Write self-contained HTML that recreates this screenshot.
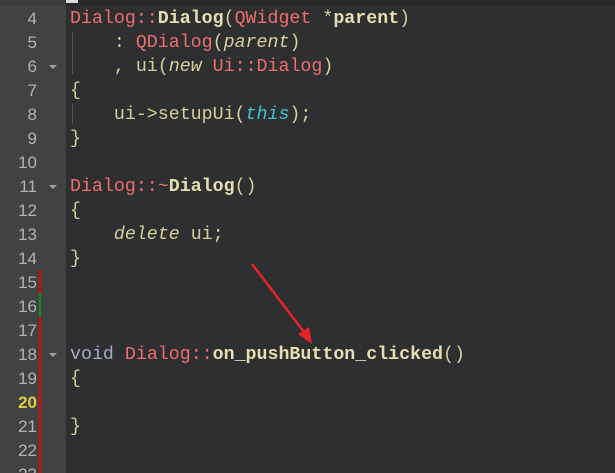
<!DOCTYPE html>
<html><head><meta charset="utf-8"><style>
html,body{margin:0;padding:0;width:615px;height:473px;overflow:hidden;background:#2e2f30;}
#wrap{position:relative;width:615px;height:473px;overflow:hidden;}
#top{position:absolute;left:0;top:0;width:615px;height:6px;background:#3a3b3c;}
#top2{position:absolute;left:66px;top:0;width:549px;height:6px;background:#28292a;}
#gut{position:absolute;left:0;top:6px;width:66px;height:467px;background:#404244;}
.ln{position:absolute;left:0;width:37px;text-align:right;font:17px "Liberation Sans","DejaVu Sans",sans-serif;color:#b4b4b4;line-height:24px;}
.code{position:absolute;left:70px;font:18.3px "Liberation Mono",monospace;color:#d6cf9a;white-space:pre;line-height:24px;}
.r{color:#ef6d6d}.b{font-weight:bold;color:#e6deb0}.i{font-style:italic}.c{color:#45c2d2;font-style:italic}.v{color:#a8a8c8}
.fold{position:absolute;left:49px;width:0;height:0;border-left:4px solid transparent;border-right:4px solid transparent;border-top:4px solid #a0a0a0;}
.guide{position:absolute;left:72px;width:1px;background:#555;}
</style></head><body><div id="wrap">
<div id="top"></div><div id="top2"></div>
<div style="position:absolute;left:66px;top:0;width:12px;height:3px;background:#ddd"></div>
<div id="gut"></div>
<div style="position:absolute;left:39px;top:270px;width:2px;height:203px;background:#e00"></div>
<div style="position:absolute;left:39px;top:293px;width:2px;height:24px;background:#1a8a1a"></div>
<div class="guide" style="top:32px;height:42px"></div>
<div class="guide" style="top:104px;height:20px"></div>
<div class="fold" style="top:65px"></div>
<div class="fold" style="top:185px"></div>
<div class="fold" style="top:353px"></div>
<div class="ln" style="top:7px">4</div>
<div class="ln" style="top:31px">5</div>
<div class="ln" style="top:55px">6</div>
<div class="ln" style="top:79px">7</div>
<div class="ln" style="top:103px">8</div>
<div class="ln" style="top:127px">9</div>
<div class="ln" style="top:151px">10</div>
<div class="ln" style="top:175px">11</div>
<div class="ln" style="top:199px">12</div>
<div class="ln" style="top:223px">13</div>
<div class="ln" style="top:247px">14</div>
<div class="ln" style="top:271px">15</div>
<div class="ln" style="top:295px">16</div>
<div class="ln" style="top:319px">17</div>
<div class="ln" style="top:343px">18</div>
<div class="ln" style="top:367px">19</div>
<div class="ln" style="top:391px;color:#e0d040;font-weight:bold">20</div>
<div class="ln" style="top:415px">21</div>
<div class="ln" style="top:439px">22</div>
<div class="ln" style="top:463px">23</div>
<div class="code" style="top:7px"><span class="r">Dialog::</span><span class="b">Dialog</span>(<span class="r">QWidget</span> *<span class="b">parent</span>)</div>
<div class="code" style="top:31px">    : <span class="r">QDialog</span>(<span class="i">parent</span>)</div>
<div class="code" style="top:55px">    , ui(<span class="i">new</span> <span class="r">Ui::Dialog</span>)</div>
<div class="code" style="top:79px">{</div>
<div class="code" style="top:103px">    ui-&gt;setupUi(<span class="c">this</span>);</div>
<div class="code" style="top:127px">}</div>
<div class="code" style="top:175px"><span class="r">Dialog::~</span><span class="b">Dialog</span>()</div>
<div class="code" style="top:199px">{</div>
<div class="code" style="top:223px">    <span class="i">delete</span> ui;</div>
<div class="code" style="top:247px">}</div>
<div class="code" style="top:343px"><span class="v">void</span> <span class="r">Dialog::</span><span class="b">on_pushButton_clicked</span>()</div>
<div class="code" style="top:367px">{</div>
<div class="code" style="top:415px">}</div>
<svg style="position:absolute;left:0;top:0" width="615" height="473">
<line x1="252" y1="264" x2="307" y2="336" stroke="#e8222a" stroke-width="2.5"/>
<polygon points="312,344 298,334 309,327" fill="#e8222a"/>
</svg>
</div></body></html>
